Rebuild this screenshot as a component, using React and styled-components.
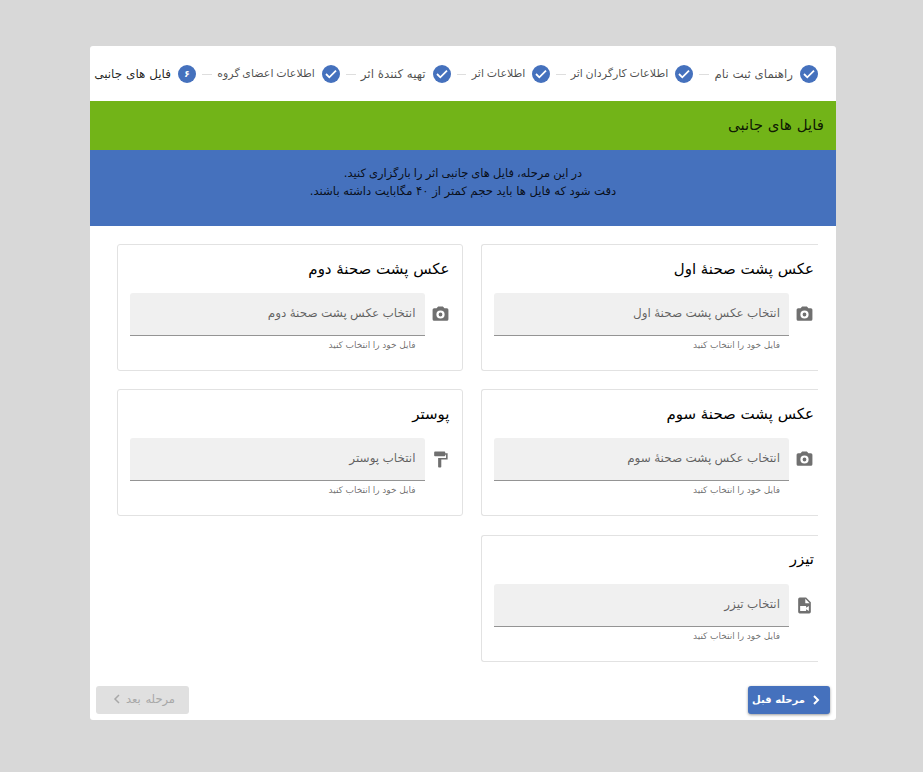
import React from "react";
import styled, { createGlobalStyle } from "styled-components";

const blue = "#4571bd";

const GlobalStyle = createGlobalStyle`
  *, *::before, *::after { box-sizing: border-box; }
  body {
    margin: 0;
    background: #d8d8d8;
    font-family: "DejaVu Sans", sans-serif;
    color: rgba(0, 0, 0, 0.87);
  }
`;

const Page = styled.div`
  direction: rtl;
  width: 923px;
  height: 772px;
  padding: 46px 87px 0 90px;
  overflow: hidden;
`;

const Sheet = styled.main`
  display: flex;
  flex-direction: column;
  width: 746px;
  height: 674px;
  background: #fff;
  border-radius: 3px;
  overflow: hidden;
`;

const Stepper = styled.ol`
  display: flex;
  align-items: center;
  height: 55px;
  margin: 0;
  padding: 1px 18px 0 4px;
  list-style: none;
`;

const Step = styled.li`
  display: flex;
  align-items: center;
  gap: 7px;
`;

const Connector = styled.li`
  flex: 1;
  height: 1px;
  margin: 0 6px;
  background: #dedede;
`;

const Badge = styled.span`
  display: flex;
  align-items: center;
  justify-content: center;
  width: 18px;
  height: 18px;
  border-radius: 50%;
  background: ${blue};
  color: #fff;
  font-size: 9px;
  font-weight: 700;
`;

const StepLabel = styled.span`
  width: ${(p) => p.$width}px;
  font-size: ${(p) => p.$size}px;
  line-height: 20px;
  word-spacing: ${(p) => p.$gap}px;
  white-space: nowrap;
  color: ${(p) => (p.$active ? "rgba(0,0,0,0.87)" : "rgba(0,0,0,0.7)")};
`;

const TitleBar = styled.header`
  display: flex;
  align-items: center;
  height: 49px;
  padding: 0 12px 1px;
  background: #72b418;
`;

const Title = styled.h1`
  margin: 0;
  font-size: 15px;
  font-weight: 400;
  line-height: 24px;
`;

const Notice = styled.div`
  height: 75.5px;
  padding: 15px 0 0;
  background: ${blue};
  text-align: center;
`;

const NoticeLine = styled.p`
  margin: 0;
  font-size: ${(p) => p.$size}px;
  line-height: 17.5px;
  word-spacing: ${(p) => p.$gap}px;
`;

const Grid = styled.section`
  display: grid;
  grid-template-columns: 337px 345.5px;
  grid-auto-rows: 127px;
  gap: 18.3px 18.5px;
  padding: 18.5px 18px 0 0;
`;

const Card = styled.article`
  padding: 11.5px 12px 0;
  border: 1px solid #e2e2e2;
  border-radius: 3px;
  ${(p) =>
    p.$clipped &&
    `
    padding-right: 4px;
    border-right: 0;
    border-top-right-radius: 0;
    border-bottom-right-radius: 0;
  `}
`;

const CardTitle = styled.h2`
  margin: 0 0 12.5px;
  font-size: 15px;
  font-weight: 400;
  line-height: 24px;
  white-space: nowrap;
  color: #000;
`;

const FieldRow = styled.div`
  display: grid;
  grid-template-columns: 19px 1fr;
  column-gap: 6px;
`;

const FieldIcon = styled.svg`
  width: 19px;
  height: 19px;
  margin-top: 12px;
  fill: #707070;
`;

const Field = styled.div`
  height: 43px;
  padding: 0 9px;
  border-bottom: 1px solid #949494;
  border-radius: 3px 3px 0 0;
  background: #f0f0f0;
  color: rgba(0, 0, 0, 0.6);
  font-size: 12px;
  line-height: 41px;
  word-spacing: -0.5px;
  white-space: nowrap;
`;

const Hint = styled.div`
  grid-column: 2;
  padding: 3px 9px 0;
  color: rgba(0, 0, 0, 0.58);
  font-size: 9px;
  line-height: 13px;
  word-spacing: -0.25px;
`;

const Actions = styled.footer`
  display: flex;
  justify-content: space-between;
  margin-top: auto;
  padding: 0 6px 6px;
`;

const Button = styled.button`
  display: flex;
  align-items: center;
  justify-content: center;
  gap: ${(p) => (p.disabled ? 2 : 4)}px;
  width: ${(p) => (p.disabled ? 93 : 82)}px;
  height: 28px;
  padding: ${(p) => (p.disabled ? "0 0 2px 0" : "0 5px 1px 2px")};
  border: 0;
  border-radius: 3px;
  background: ${(p) => (p.disabled ? "#e0e0e0" : blue)};
  color: ${(p) => (p.disabled ? "#a8a8a8" : "#fff")};
  box-shadow: ${(p) => (p.disabled ? "none" : "0 1px 3px rgba(0,0,0,0.4)")};
  font-family: inherit;
  font-size: ${(p) => (p.disabled ? 11.5 : 10)}px;
  font-weight: ${(p) => (p.disabled ? 400 : 700)};
  word-spacing: ${(p) => (p.disabled ? 1 : 0)}px;
  white-space: nowrap;
`;

const Chevron = styled.svg`
  flex: none;
  width: 14px;
  height: 14px;
  fill: none;
  stroke: currentColor;
  stroke-width: ${(p) => p.$weight};
`;

const icons = {
  camera: (
    <path
      fillRule="evenodd"
      d="M4 4h3l2-2h6l2 2h3a2 2 0 0 1 2 2v12a2 2 0 0 1-2 2H4a2 2 0 0 1-2-2V6a2 2 0 0 1 2-2zm8 2.800a5.200 5.200 0 1 0 0 10.400 5.200 5.200 0 0 0 0-10.400zm0 2.800a2.400 2.400 0 1 1 0 4.800 2.400 2.400 0 0 1 0-4.800z"
    />
  ),
  roller: (
    <path d="M18 4V3c0-.55-.45-1-1-1H5c-.55 0-1 .45-1 1v4c0 .55.45 1 1 1h12c.55 0 1-.45 1-1V6h1v4H9v11c0 .55.45 1 1 1h2c.55 0 1-.45 1-1v-9h8V4h-3z" />
  ),
  video: (
    <path
      fillRule="evenodd"
      d="M13 9h5.500L13 3.500V9zM6 2h8l6 6v12a2 2 0 0 1-2 2H6a2 2 0 0 1-2-2V4a2 2 0 0 1 2-2zM17.500 19v-6.500L14 14.900V12.500H6.500V19H14v-2.400l3.500 2.400z"
    />
  ),
};

const steps = [
  { label: "راهنمای ثبت نام", width: 78, size: 11.8, gap: 0 },
  { label: "اطلاعات کارگردان اثر", width: 96, size: 11, gap: -0.8 },
  { label: "اطلاعات اثر", width: 53, size: 11, gap: -0.7 },
  { label: "تهیه کنندهٔ اثر", width: 64, size: 11.9, gap: 0 },
  { label: "اطلاعات اعضای گروه", width: 97, size: 11, gap: -0.8 },
  { label: "فایل های جانبی", width: 77, size: 12, gap: 0, number: "۶" },
];

const uploads = [
  { name: "عکس پشت صحنهٔ اول", icon: "camera" },
  { name: "عکس پشت صحنهٔ دوم", icon: "camera" },
  { name: "عکس پشت صحنهٔ سوم", icon: "camera" },
  { name: "پوستر", icon: "roller" },
  { name: "تیزر", icon: "video" },
];

function StepItem({ step, first }) {
  return (
    <>
      {!first && <Connector aria-hidden="true" />}
      <Step>
        <Badge>
          {step.number || (
            <svg width="14" height="14" viewBox="0 0 14 14" fill="none" stroke="#fff" strokeWidth="1.8">
              <path d="m2 7 3.300 3.300L12 3.600" />
            </svg>
          )}
        </Badge>
        <StepLabel
          $width={step.width}
          $size={step.size}
          $gap={step.gap}
          $active={Boolean(step.number)}
        >
          {step.label}
        </StepLabel>
      </Step>
    </>
  );
}

function UploadCard({ name, icon, clipped }) {
  return (
    <Card $clipped={clipped}>
      <CardTitle>{name}</CardTitle>
      <FieldRow>
        <FieldIcon viewBox="0 0 24 24">{icons[icon]}</FieldIcon>
        <Field>انتخاب {name}</Field>
        <Hint>فایل خود را انتخاب کنید</Hint>
      </FieldRow>
    </Card>
  );
}

export default function App() {
  return (
    <Page lang="fa">
      <GlobalStyle />
      <Sheet>
        <Stepper>
          {steps.map((step, i) => (
            <StepItem key={step.label} step={step} first={i === 0} />
          ))}
        </Stepper>
        <TitleBar>
          <Title>فایل های جانبی</Title>
        </TitleBar>
        <Notice>
          <NoticeLine $size={11.5} $gap={-0.6}>
            در این مرحله، فایل های جانبی اثر را بارگزاری کنید.
          </NoticeLine>
          <NoticeLine $size={11.7} $gap={-0.2}>
            دقت شود که فایل ها باید حجم کمتر از ۴۰ مگابایت داشته باشند.
          </NoticeLine>
        </Notice>
        <Grid>
          {uploads.map((upload, i) => (
            <UploadCard key={upload.name} {...upload} clipped={i % 2 === 0} />
          ))}
        </Grid>
        <Actions>
          <Button>
            <Chevron viewBox="0 0 14 14" $weight={2}>
              <path d="m5 3 4 4-4 4" />
            </Chevron>
            مرحله قبل
          </Button>
          <Button disabled>
            مرحله بعد
            <Chevron viewBox="0 0 14 14" $weight={1.5}>
              <path d="m9 3-4 4 4 4" />
            </Chevron>
          </Button>
        </Actions>
      </Sheet>
    </Page>
  );
}
